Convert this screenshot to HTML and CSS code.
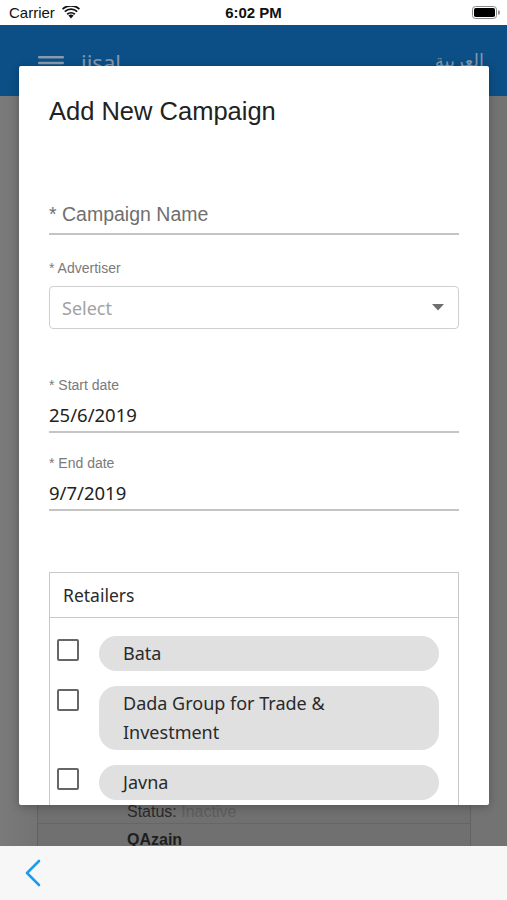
FILE: index.html
```html
<!DOCTYPE html>
<html>
<head>
<meta charset="utf-8">
<link rel="stylesheet" href="styles.css">
</head>
<body>
<div class="phone">
  <div class="statusbar">
    <div class="sb-left">
      <span class="carrier">Carrier</span>
      <svg class="wifi" width="18" height="13" viewBox="0 0 18 13">
        <path d="M9 12.6 L6.4 9.6 A4 4 0 0 1 11.6 9.6 Z" fill="#111"/>
        <path d="M4.6 7.6 A6.6 6.6 0 0 1 13.4 7.6 L12.2 8.9 A4.9 4.9 0 0 0 5.8 8.9 Z" fill="#111"/>
        <path d="M2.2 5 A10 10 0 0 1 15.8 5 L14.6 6.3 A8.2 8.2 0 0 0 3.4 6.3 Z" fill="#111"/>
        <path d="M0 2.5 A13 13 0 0 1 18 2.5 L16.8 3.8 A11.3 11.3 0 0 0 1.2 3.8 Z" fill="#111"/>
      </svg>
    </div>
    <div class="sb-time">6:02 PM</div>
    <div class="sb-right">
      <svg width="28" height="13" viewBox="0 0 28 13">
        <rect x="0.5" y="0.5" width="24" height="12" rx="3" fill="none" stroke="#888" stroke-width="1"/>
        <rect x="2" y="2" width="21" height="9" rx="1.8" fill="#000"/>
        <path d="M26 4.3 A2 2 0 0 1 26 8.7 Z" fill="#999"/>
      </svg>
    </div>
  </div>

  <header class="appbar">
    <div class="brand">
      <svg class="burger" width="26" height="14" viewBox="0 0 26 14">
        <rect x="0" y="0" width="26" height="2.6" rx="1.3" fill="#8a9aad"/>
        <rect x="0" y="5.7" width="26" height="2.6" rx="1.3" fill="#8a9aad"/>
        <rect x="0" y="11.4" width="26" height="2.6" rx="1.3" fill="#8a9aad"/>
      </svg>
      <span class="logo">iisal</span>
    </div>
    <span class="lang" lang="ar" dir="rtl">العربية</span>
  </header>

  <main class="content">
    <div class="card">
      <div class="card-row"><span class="k">Status:</span> <span class="v">Inactive</span></div>
      <div class="card-row name">QAzain</div>
    </div>
  </main>

  <nav class="bottombar">
    <svg class="back" width="18" height="28" viewBox="0 0 18 28">
      <path d="M15 2 L3 14 L15 26" fill="none" stroke="#1e9bea" stroke-width="2.6" stroke-linecap="round" stroke-linejoin="round"/>
    </svg>
  </nav>

  <div class="dialog">
    <h1 class="title">Add New Campaign</h1>

    <div class="field field-name">
      <div class="placeholder">* Campaign Name</div>
    </div>

    <div class="label label-adv">* Advertiser</div>
    <div class="select">
      <span class="select-text">Select</span>
      <svg width="12" height="7" viewBox="0 0 12 7"><path d="M0 0 L12 0 L6 6.5 Z" fill="#6e6e6e"/></svg>
    </div>

    <div class="label label-start">* Start date</div>
    <div class="field field-date">
      <div class="value">25/6/2019</div>
    </div>

    <div class="label label-end">* End date</div>
    <div class="field field-date">
      <div class="value">9/7/2019</div>
    </div>

    <div class="retailers">
      <div class="ret-head">Retailers</div>
      <div class="ret-list">
        <div class="ret-item">
          <span class="check"></span>
          <span class="pill">Bata</span>
        </div>
        <div class="ret-item">
          <span class="check"></span>
          <span class="pill">Dada Group for Trade &amp; Investment</span>
        </div>
        <div class="ret-item">
          <span class="check"></span>
          <span class="pill">Javna</span>
        </div>
      </div>
    </div>
  </div>
</div>
</body>
</html>
```

FILE: styles.css
```css
* { box-sizing: border-box; }
html, body { margin: 0; padding: 0; }
body {
  font-family: "Liberation Sans", Arial, sans-serif;
  background: #737373;
}
.phone {
  position: relative;
  width: 507px;
  height: 900px;
  display: flex;
  flex-direction: column;
  overflow: hidden;
}

/* status bar */
.statusbar {
  height: 25px;
  background: #fff;
  display: flex;
  align-items: center;
  justify-content: space-between;
  padding: 0 7px 0 9px;
  position: relative;
}
.sb-left { display: flex; align-items: center; gap: 7px; }
.carrier { font-size: 15px; color: #111; }
.wifi { margin-top: -1px; }
.sb-time {
  position: absolute;
  left: 0; right: 0;
  text-align: center;
  font-size: 15px;
  font-weight: bold;
  color: #111;
  pointer-events: none;
}
.sb-right { display: flex; align-items: center; }

/* app bar (dimmed) */
.appbar {
  height: 71px;
  background: #0b4f86;
  display: flex;
  justify-content: space-between;
  align-items: flex-start;
  padding: 24px 23px 0 38px;
}
.brand { display: flex; align-items: center; gap: 17px; }
.burger { margin-top: 2px; }
.logo {
  font-family: "Noto Sans", "Open Sans", sans-serif;
  font-size: 22px;
  color: #8497ab;
  line-height: 26px;
}
.lang {
  font-family: "Noto Sans", "DejaVu Sans", sans-serif;
  font-size: 18px;
  color: #8497ab;
  line-height: 24px;
  margin-top: -1px;
}

/* dimmed page content */
.content {
  flex: 1;
  display: flex;
  flex-direction: column;
  justify-content: flex-end;
  overflow: hidden;
  background: linear-gradient(90deg, #7a7a7a 0, #737373 37px, #737373 100%);
}
.card {
  margin: 0 36px 0 37px;
  background: #707070;
  border-left: 1px solid #626262;
  border-right: 1px solid #626262;
  height: 60px;
  padding: 0 0 0 89px;
  margin-bottom: -14px;
}
.card-row {
  font-size: 16px;
  line-height: 20px;
}
.card-row:first-child {
  padding-top: 2px;
  padding-bottom: 1px;
  border-bottom: 1px solid #666;
  margin-left: -89px;
  padding-left: 89px;
}
.k { color: #2a2a2a; }
.v { color: #5e5e5e; }
.card-row.name {
  font-weight: bold;
  color: #1e1e1e;
  padding-top: 6px;
}

/* bottom bar */
.bottombar {
  height: 54px;
  background: #f7f7f7;
  display: flex;
  align-items: center;
  padding-left: 24px;
  position: relative;
}

/* dialog */
.dialog {
  position: absolute;
  top: 66px;
  left: 19px;
  width: 470px;
  height: 739px;
  background: #fff;
  border-radius: 2px;
  box-shadow: 0 2px 10px rgba(0,0,0,0.25);
  padding: 0 30px;
  overflow: hidden;
}
.title {
  margin: 30px 0 0 0;
  font-family: "Liberation Sans", Arial, sans-serif;
  font-weight: normal;
  font-size: 25.5px;
  line-height: 30px;
  color: #222;
}
.field {
  border-bottom: 2px solid #c4c4c4;
}
.field-name {
  margin-top: 76px;
  padding-bottom: 7px;
}
.placeholder {
  font-size: 19.5px;
  line-height: 24px;
  color: #6f6f6f;
}
.label {
  font-size: 14px;
  line-height: 18px;
  color: #7a7a7a;
}
.label-adv { margin-top: 24px; }
.select {
  margin-top: 9px;
  height: 43px;
  border: 1px solid #cfcfcf;
  border-radius: 4px;
  display: flex;
  align-items: center;
  justify-content: space-between;
  padding: 0 14px 0 12px;
}
.select-text {
  font-family: "Noto Sans", "Open Sans", sans-serif;
  font-size: 18px;
  color: #a2a2a2;
}
.label-start { margin-top: 47px; }
.label-end { margin-top: 21px; }
.field-date {
  margin-top: 9px;
  padding-bottom: 4px;
}
.value {
  font-family: "Noto Sans", "Open Sans", sans-serif;
  font-size: 18.5px;
  line-height: 24px;
  color: #222;
}

/* retailers */
.retailers {
  margin-top: 61px;
  border: 1px solid #c8c8c8;
  border-bottom: none;
  font-family: "Noto Sans", "Open Sans", sans-serif;
}
.ret-head {
  height: 45px;
  border-bottom: 1px solid #c8c8c8;
  display: flex;
  align-items: center;
  padding-left: 13px;
  font-size: 17.5px;
  color: #2a2a2a;
}
.ret-list {
  padding: 18px 19px 30px 7px;
  display: flex;
  flex-direction: column;
  gap: 15px;
}
.ret-item {
  display: flex;
  align-items: flex-start;
  gap: 20px;
}
.check {
  flex: none;
  width: 22px;
  height: 22px;
  margin-top: 3px;
  border: 2px solid #666;
  border-radius: 2px;
}
.pill {
  flex: 1;
  background: #e0e0e0;
  border-radius: 18px;
  padding: 3px 40px 3px 24px;
  font-size: 18px;
  line-height: 29px;
  color: #2a2a2a;
}
```
